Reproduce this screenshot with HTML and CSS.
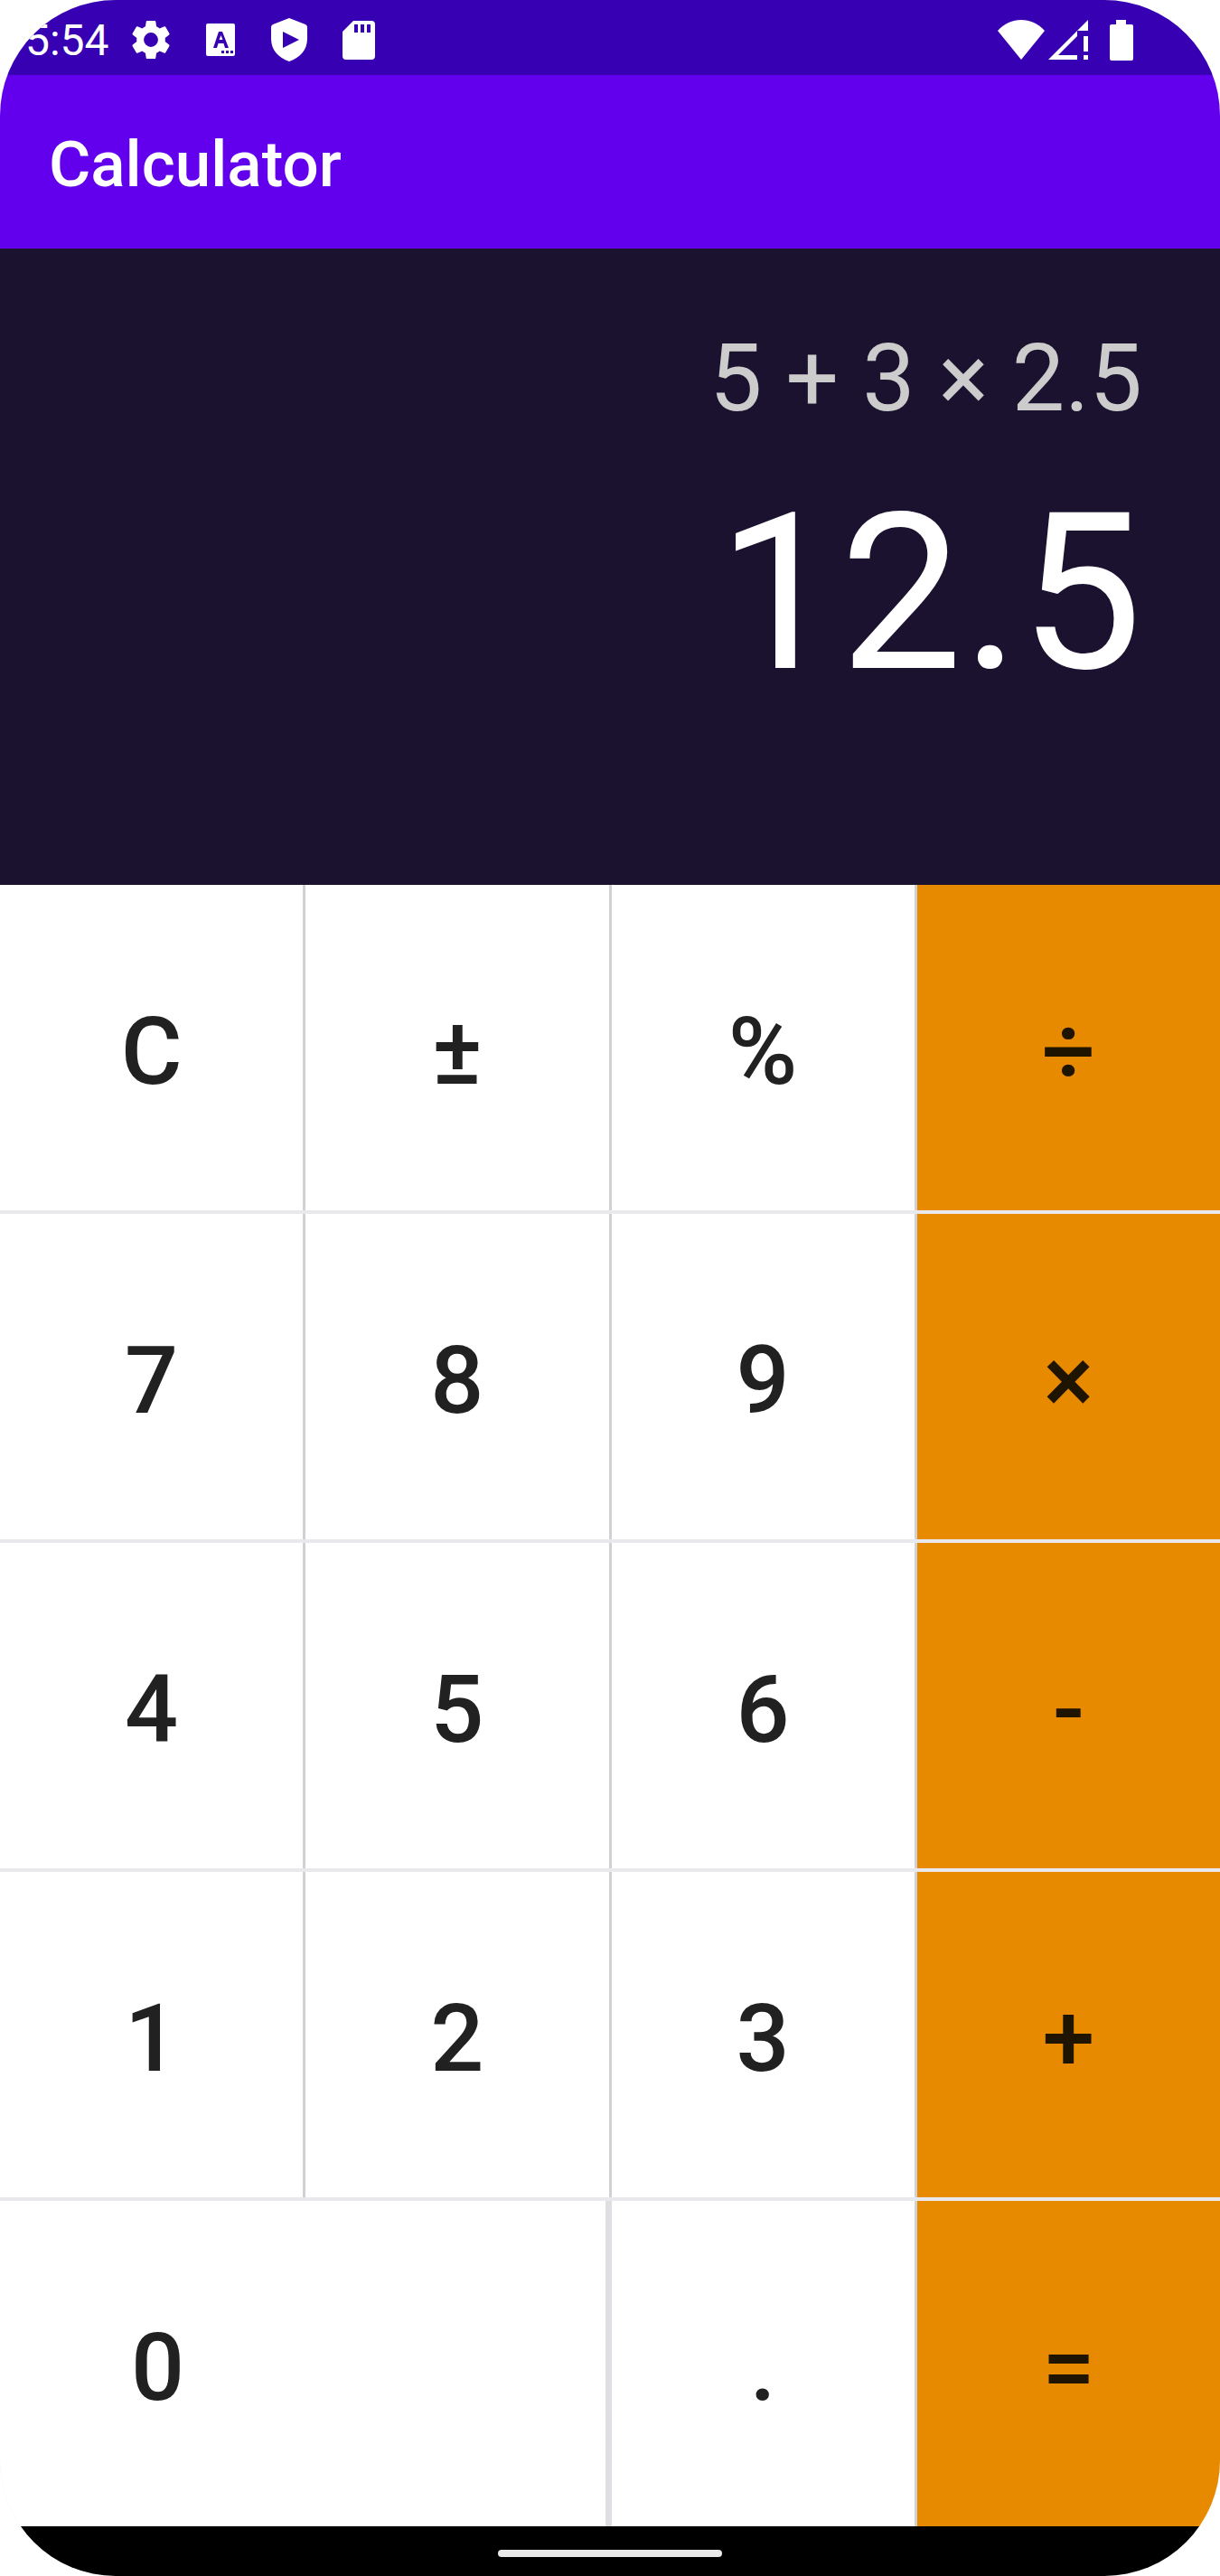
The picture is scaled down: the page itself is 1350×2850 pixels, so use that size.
FILE: index.html
```html
<!DOCTYPE html>
<html lang="en">
<head>
<meta charset="utf-8">
<meta name="viewport" content="width=device-width, initial-scale=1">
<title>Calculator</title>
<link rel="stylesheet" href="styles.css">
</head>
<body>
<div class="phone">
  <div class="status-bar">
    <span class="clock">5:54</span>
    <div class="notifications">
      <svg class="icon-gear" width="44" height="44" viewBox="2 2 20 20" aria-hidden="true"><path d="M19.14 12.94c.04-.3.06-.61.06-.94 0-.32-.02-.64-.07-.94l2.03-1.58a.49.49 0 0 0 .12-.61l-1.92-3.32a.49.49 0 0 0-.59-.22l-2.39.96c-.5-.38-1.03-.7-1.62-.94l-.36-2.54a.48.48 0 0 0-.48-.41h-3.84a.47.47 0 0 0-.47.41l-.36 2.54c-.59.24-1.13.57-1.62.94l-2.39-.96a.48.48 0 0 0-.59.22L2.74 8.87a.47.47 0 0 0 .12.61l2.03 1.58c-.05.3-.09.63-.09.94s.02.64.07.94l-2.03 1.58a.49.49 0 0 0-.12.61l1.92 3.32c.12.22.37.29.59.22l2.39-.96c.5.38 1.03.7 1.62.94l.36 2.54c.05.24.24.41.48.41h3.84c.24 0 .44-.17.47-.41l.36-2.54c.59-.24 1.13-.56 1.62-.94l2.39.96c.22.08.47 0 .59-.22l1.92-3.32a.47.47 0 0 0-.12-.61zM12 15.6a3.6 3.6 0 1 1 0-7.2 3.6 3.6 0 0 1 0 7.2z"/></svg>
      <svg width="33" height="36" viewBox="0 0 33 36" aria-hidden="true"><path fill-rule="evenodd" d="M2 0h28q2 0 2 2v32q0 2-2 2H2q-2 0-2-2V2q0-2 2-2zM14 9L8 27h4l1.500-5h6l1.500 5h4L18 9zM14.500 18l2-5 2 5zM17 30v3h3v-3zM22 30v3h3v-3zM27 30v3h3v-3z"/></svg>
      <svg width="40" height="48" viewBox="0 0 40 48" aria-hidden="true"><path fill-rule="evenodd" d="M20 0l18 7q2 1 2 3v13c0 12-8 21-20 25C8 44 0 35 0 23V10q0-2 2-3zM13 15v18l18-9z"/></svg>
      <svg width="36" height="43" viewBox="0 0 36 43" aria-hidden="true"><path fill-rule="evenodd" d="M12 0h20q4 0 4 4v35q0 4-4 4H4q-4 0-4-4V12zM13 4v9h4V4zM20 4v9h4V4zM27 4v9h4V4z"/></svg>
    </div>
    <div class="system-icons">
      <svg width="52" height="44" viewBox="0 0 52 44" aria-hidden="true"><path d="M26 44L0 12C14-4 38-4 52 12z"/></svg>
      <svg width="44" height="44" viewBox="0 0 44 44" aria-hidden="true"><path fill-rule="evenodd" d="M0 44L44 0v12H32v6L11 39h21v5zM39 18h5v17h-5zM39 39h5v5h-5z"/></svg>
      <svg class="icon-battery" width="26" height="45" viewBox="0 0 26 45" aria-hidden="true"><path d="M7 0h11v5h6q2 0 2 2v36q0 2-2 2H2q-2 0-2-2V7q0-2 2-2h5z"/></svg>
    </div>
  </div>
  <header class="app-bar"><h1>Calculator</h1></header>
  <main>
    <section class="display" aria-label="Display">
      <div class="expression">5 + 3 × 2.5</div>
      <output class="result">12.5</output>
    </section>
    <div class="keypad">
      <button type="button">C</button><button type="button">±</button><button type="button">%</button><button type="button" class="operator">÷</button>
      <button type="button">7</button><button type="button">8</button><button type="button">9</button><button type="button" class="operator">×</button>
      <button type="button">4</button><button type="button">5</button><button type="button">6</button><button type="button" class="operator">-</button>
      <button type="button">1</button><button type="button">2</button><button type="button">3</button><button type="button" class="operator">+</button>
      <button type="button" class="zero">0</button><button type="button">.</button><button type="button" class="operator">=</button>
    </div>
  </main>
  <div class="nav-bar"><span class="home-handle"></span></div>
</div>
</body>
</html>
```
FILE: styles.css
```css
* {
  box-sizing: border-box;
}

body {
  margin: 0;
  background: #ffffff;
  font-family: Roboto, "Liberation Sans", sans-serif;
}

.phone {
  display: flex;
  flex-direction: column;
  min-height: 100vh;
  border-radius: 128px;
  overflow: hidden;
}

.status-bar {
  display: flex;
  align-items: center;
  gap: 24px;
  height: 83px;
  padding: 5px 96px 0 28px;
  background: #3700b3;
  color: #ffffff;
}

.status-bar svg {
  display: block;
  fill: currentColor;
}

.clock {
  padding-top: 2px;
  font-size: 48px;
  line-height: 56px;
}

.notifications {
  display: flex;
  align-items: center;
  gap: 39px;
}

.system-icons {
  display: flex;
  align-items: center;
  gap: 4px;
  margin-left: auto;
}

.icon-battery {
  margin-left: 20px;
}

.app-bar {
  display: flex;
  align-items: center;
  height: 192px;
  padding: 6px 54px 0;
  background: #6200ee;
  color: #ffffff;
}

.app-bar h1 {
  margin: 0;
  font-size: 71px;
  font-weight: 500;
  line-height: 80px;
}

main {
  display: flex;
  flex: 1;
  flex-direction: column;
}

.display {
  display: flex;
  flex-direction: column;
  height: 704px;
  padding: 82px 86px 0;
  background: #1b1230;
  text-align: right;
}

.expression {
  color: #cccccc;
  font-size: 104px;
  line-height: 124px;
}

.result {
  margin-top: 34px;
  color: #ffffff;
  font-size: 241px;
  line-height: 284px;
}

.keypad {
  display: grid;
  flex: 1;
  grid-template-columns: repeat(4, 1fr);
  grid-auto-rows: minmax(360px, 1fr);
  gap: 4px 3px;
  background: #e9e9ed;
}

.keypad button {
  min-width: 0;
  margin: 0;
  padding: 8px 0 0;
  border: 0;
  border-radius: 0;
  background: #ffffff;
  box-shadow: 3px 0 #d0d1d4;
  color: #212121;
  font: inherit;
  font-size: 104px;
  font-weight: 500;
}

.keypad .operator {
  background: #e88a00;
  box-shadow: none;
  color: #1f1400;
}

.keypad .zero {
  grid-column: span 2;
  margin-right: 4px;
  padding-left: 145px;
  box-shadow: 7px 0 #dedfe3;
  text-align: left;
}

.nav-bar {
  display: flex;
  align-items: center;
  justify-content: center;
  height: 55px;
  padding-top: 4px;
  background: #000000;
}

.home-handle {
  width: 248px;
  height: 8px;
  border-radius: 4px;
  background: #e9e9e9;
}
```
